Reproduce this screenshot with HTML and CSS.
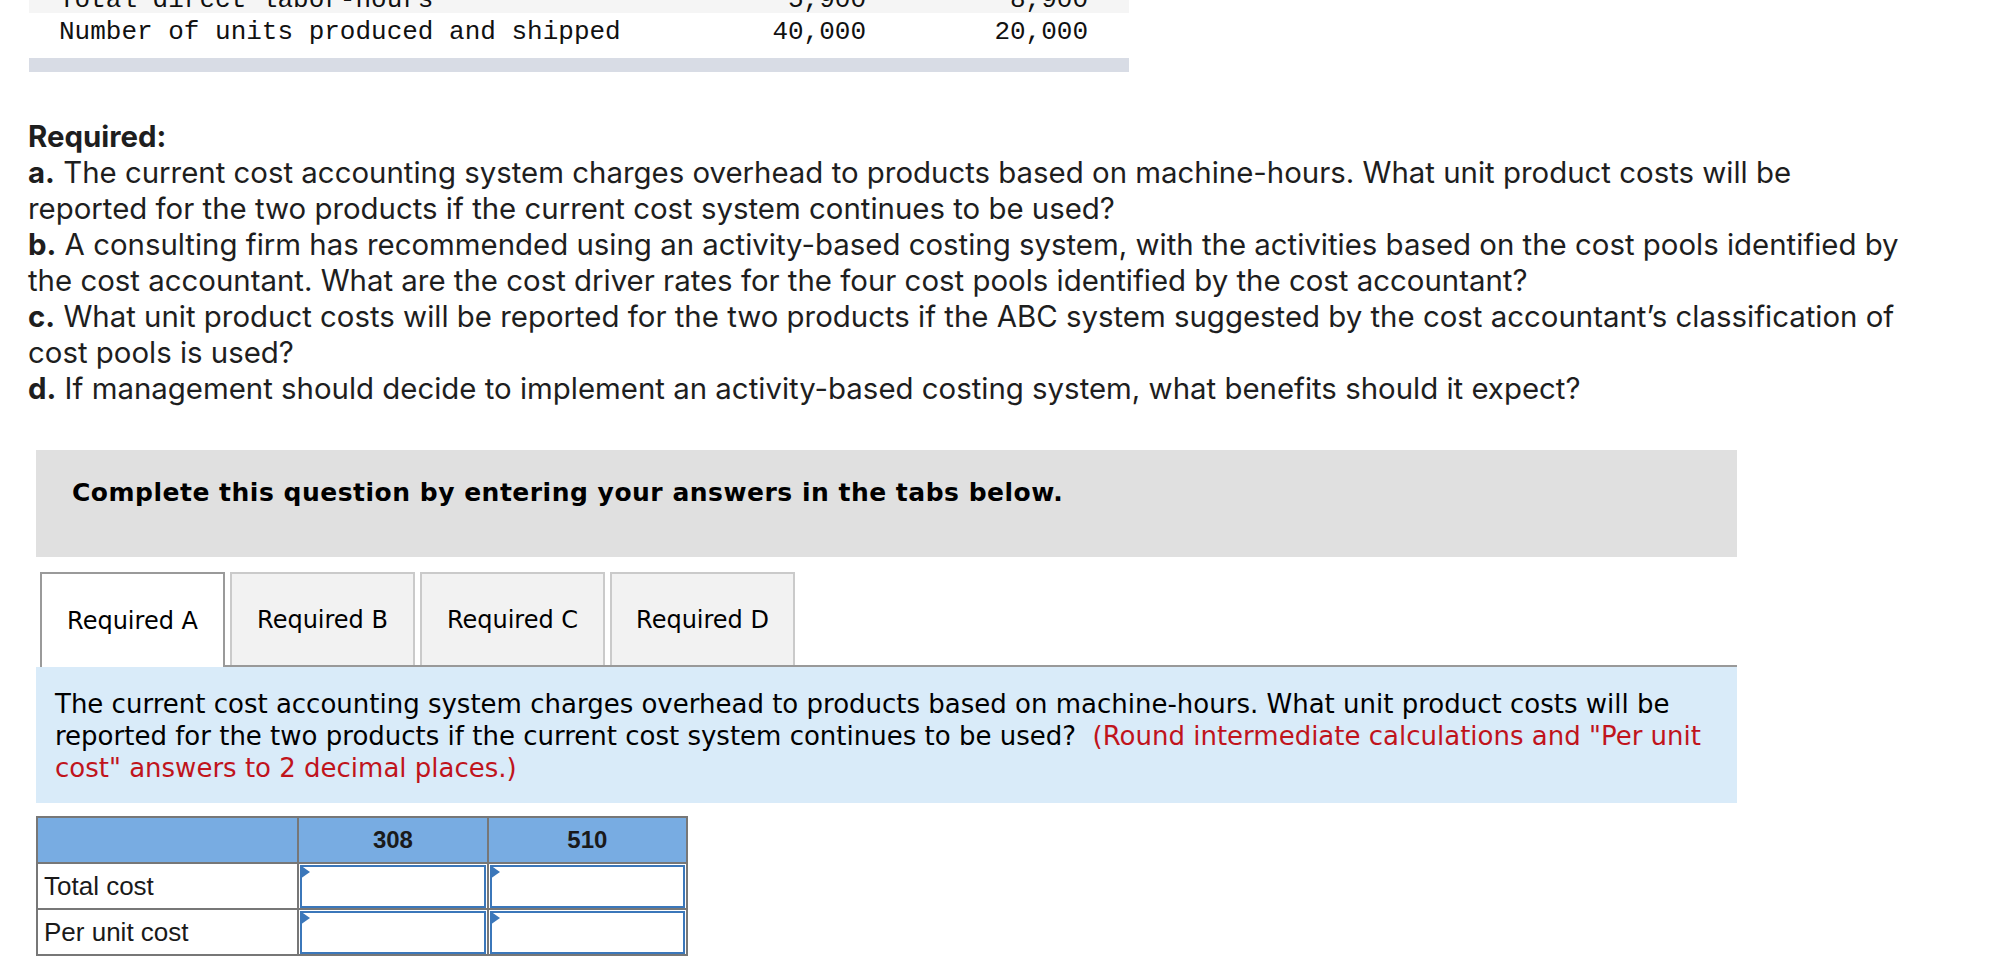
FILE: index.html
```html
<!DOCTYPE html>
<html lang="en">
<head>
<meta charset="utf-8">
<title>Required</title>
<link rel="stylesheet" href="styles.css">
</head>
<body>
<div class="data-table">
  <div class="data-row shaded">
    <span class="lbl">Total direct labor-hours</span>
    <span class="num">5,900</span>
    <span class="num">8,900</span>
  </div>
  <div class="data-row">
    <span class="lbl">Number of units produced and shipped</span>
    <span class="num">40,000</span>
    <span class="num">20,000</span>
  </div>
</div>
<div class="table-foot"></div>

<div class="required">
  <div class="req-title">Required:</div>
  <div class="req-item"><b>a.</b> The current cost accounting system charges overhead to products based on machine-hours. What unit product costs will be<br>reported for the two products if the current cost system continues to be used?</div>
  <div class="req-item"><b>b.</b> A consulting firm has recommended using an activity-based costing system, with the activities based on the cost pools identified by<br>the cost accountant. What are the cost driver rates for the four cost pools identified by the cost accountant?</div>
  <div class="req-item"><b>c.</b> What unit product costs will be reported for the two products if the ABC system suggested by the cost accountant’s classification of<br>cost pools is used?</div>
  <div class="req-item"><b>d.</b> If management should decide to implement an activity-based costing system, what benefits should it expect?</div>
</div>

<div class="instructions">Complete this question by entering your answers in the tabs below.</div>

<div class="tabs">
  <div class="tab active">Required A</div>
  <div class="tab">Required B</div>
  <div class="tab">Required C</div>
  <div class="tab">Required D</div>
</div>

<div class="prompt">The current cost accounting system charges overhead to products based on machine-hours. What unit product costs will be<br>reported for the two products if the current cost system continues to be used?&nbsp; <span class="hint">(Round intermediate calculations and "Per unit<br>cost" answers to 2 decimal places.)</span></div>

<table class="answer">
  <colgroup>
    <col class="c1"><col class="c2"><col class="c3">
  </colgroup>
  <thead>
    <tr><th></th><th>308</th><th>510</th></tr>
  </thead>
  <tbody>
    <tr><td class="label">Total cost</td><td class="in"><div class="field"></div></td><td class="in"><div class="field"></div></td></tr>
    <tr><td class="label">Per unit cost</td><td class="in"><div class="field"></div></td><td class="in"><div class="field"></div></td></tr>
  </tbody>
</table>
</body>
</html>
```

FILE: styles.css
```css
* { box-sizing: border-box; }
html, body { margin: 0; padding: 0; background: #fff; }
body { overflow: hidden; }

.data-table {
  margin: -19px 0 0 29px;
  width: 1100px;
  font-family: "Liberation Mono", "Courier New", monospace;
  font-size: 26px;
  color: #111;
}
.data-row {
  display: grid;
  grid-template-columns: 1fr 150px 222px;
  height: 32px;
  line-height: 38px;
  padding: 0 41px 0 30px;
}
.data-row.shaded { background: #f5f5f5; }
.data-row .num { text-align: right; }
.table-foot {
  margin: 13px 0 0 29px;
  width: 1100px;
  height: 14px;
  background: #d8dce5;
}

.required {
  margin: 47px 0 0 28px;
  width: 1970px;
  white-space: nowrap;
  font-family: Inter, Lato, sans-serif;
  font-size: 29.4px;
  line-height: 36px;
  color: #1e1e1e;
}
.req-title { font-weight: 700; }
.req-item b { font-weight: 700; }

.instructions {
  margin: 43px 0 0 36px;
  width: 1701px;
  height: 107px;
  padding: 29px 0 0 36px;
  background: #e0e0e0;
  font-family: "DejaVu Sans", Verdana, sans-serif;
  font-weight: 700;
  font-size: 25px;
  letter-spacing: 0.5px;
  line-height: 28px;
  color: #000;
}

.tabs {
  display: flex;
  align-items: flex-start;
  gap: 5px;
  margin: 15px 0 0 40px;
  width: 1697px;
  height: 95px;
  border-bottom: 2px solid #999;
}
.tab {
  width: 185px;
  height: 93px;
  border: 2px solid #cacaca;
  border-bottom: none;
  background: #f2f2f2;
  display: flex;
  align-items: center;
  justify-content: center;
  font-family: "DejaVu Sans", Verdana, sans-serif;
  font-size: 24px;
  color: #000;
}
.tab.active {
  height: 95px;
  margin-bottom: -2px;
  background: #fff;
  border-color: #9a9a9a;
}

.prompt {
  margin: 0 0 0 36px;
  width: 1701px;
  padding: 21px 19px 19px 19px;
  background: #d9ebf9;
  white-space: nowrap;
  font-family: "DejaVu Sans", Verdana, sans-serif;
  font-size: 26px;
  line-height: 32px;
  color: #000;
}
.hint { color: #c0141c; }

.answer {
  margin: 13px 0 0 36px;
  width: 652px;
  border-collapse: collapse;
  border: 2px solid #777;
  font-family: "Liberation Sans", Arial, sans-serif;
  font-size: 24px;
  color: #1a1a1a;
}
.answer col.c1 { width: 262px; }
.answer col.c2 { width: 190px; }
.answer col.c3 { width: 200px; }
.answer th, .answer td {
  border: 2px solid #777;
  height: 46px;
  padding: 0;
}
.answer th {
  background: #78ace2;
  font-weight: 700;
  text-align: center;
}
.answer td.label {
  padding-left: 6px;
  font-size: 26px;
}
.field {
  position: relative;
  height: 43px;
  margin: 0 1px;
  border: 2px solid #3b77ba;
  background: #fff;
}
.field::before {
  content: "";
  position: absolute;
  left: -2px;
  top: -2px;
  border-top: 7px solid transparent;
  border-bottom: 7px solid transparent;
  border-left: 10px solid #3b77ba;
}
```
